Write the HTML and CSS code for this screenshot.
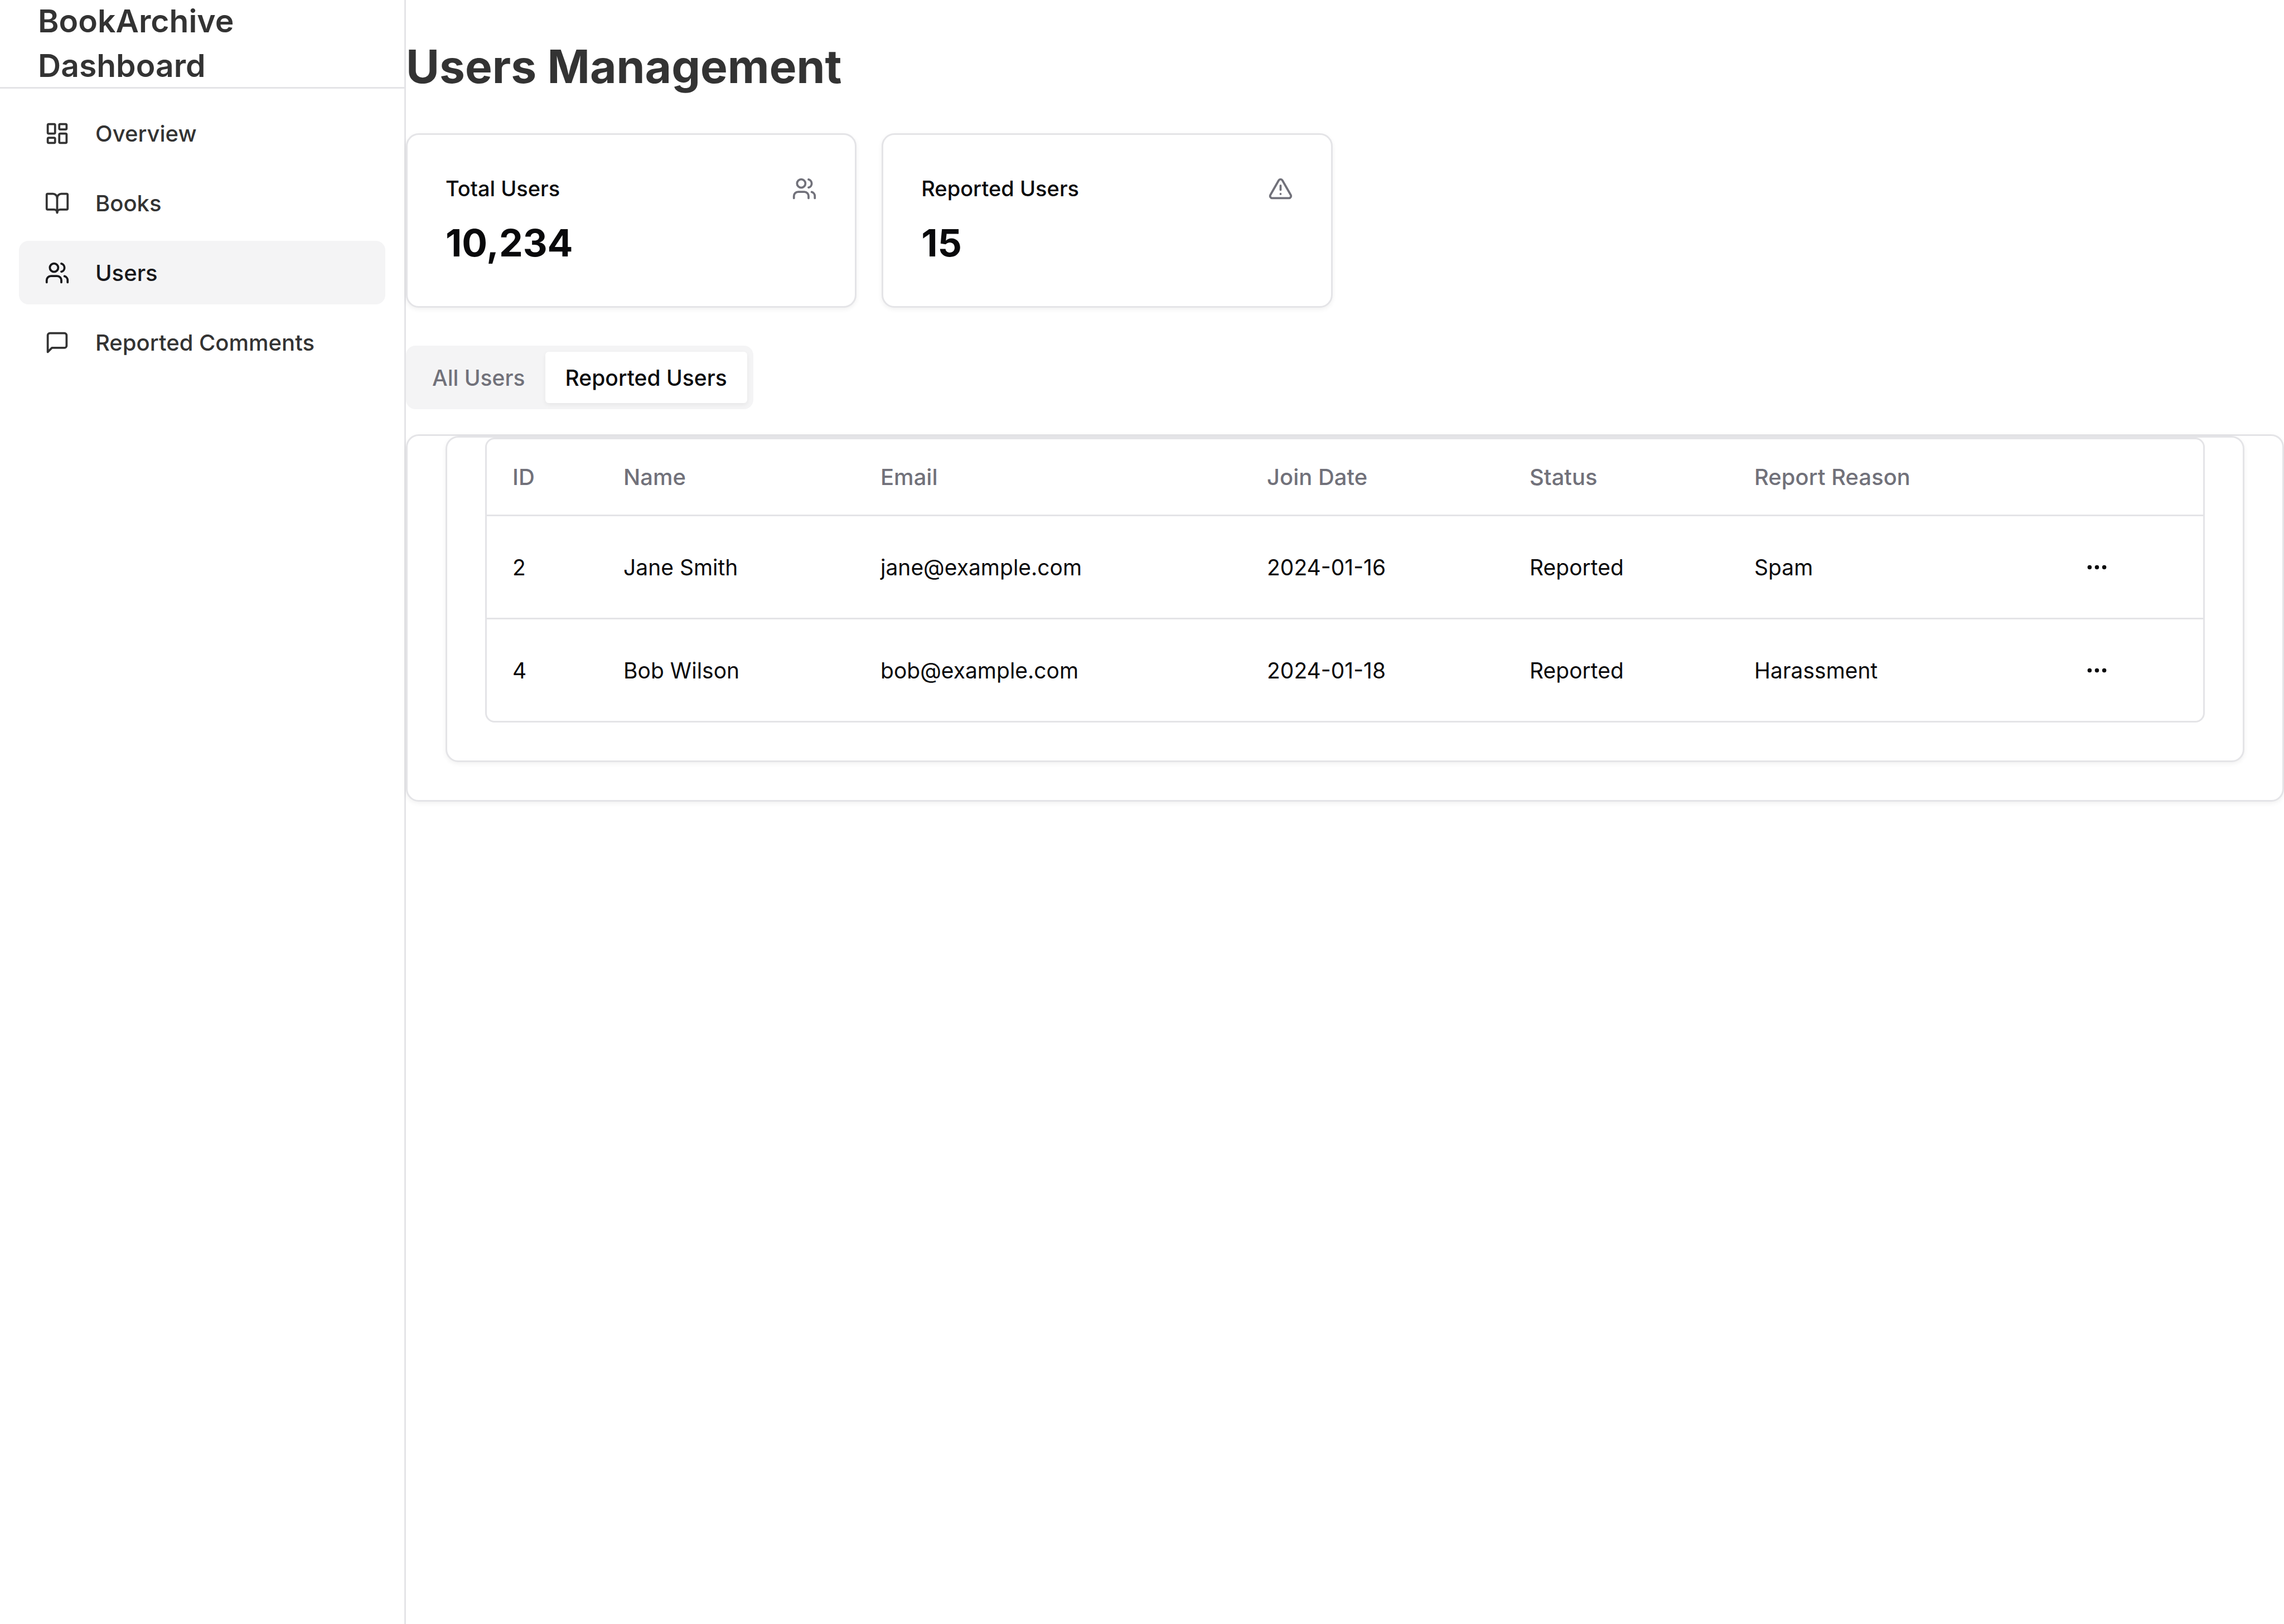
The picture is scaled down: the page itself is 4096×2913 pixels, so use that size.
FILE: index.html
```html
<!DOCTYPE html>
<html lang="en">
<head>
<meta charset="utf-8">
<meta name="viewport" content="width=device-width, initial-scale=1">
<title>Users Management - BookArchive Dashboard</title>
<link rel="stylesheet" href="styles.css">
</head>
<body>
<svg class="sprite" aria-hidden="true">
  <symbol id="icon-users" viewBox="0 0 24 24"><path d="M16 21v-2a4 4 0 0 0-4-4H6a4 4 0 0 0-4 4v2"/><circle cx="9" cy="7" r="4"/><path d="M22 21v-2a4 4 0 0 0-3-3.87"/><path d="M16 3.13a4 4 0 0 1 0 7.75"/></symbol>
  <symbol id="icon-more" viewBox="0 0 24 24"><circle cx="12" cy="12" r="1"/><circle cx="19" cy="12" r="1"/><circle cx="5" cy="12" r="1"/></symbol>
</svg>
<div class="layout">
  <aside class="sidebar">
    <div class="brand"><span class="brand-name">BookArchive Dashboard</span></div>
    <nav class="nav" aria-label="Main">
      <a class="nav-link" href="#overview">
        <svg class="icon" viewBox="0 0 24 24" aria-hidden="true"><rect width="7" height="9" x="3" y="3" rx="1"/><rect width="7" height="5" x="14" y="3" rx="1"/><rect width="7" height="9" x="14" y="12" rx="1"/><rect width="7" height="5" x="3" y="16" rx="1"/></svg>
        Overview
      </a>
      <a class="nav-link" href="#books">
        <svg class="icon" viewBox="0 0 24 24" aria-hidden="true"><path d="M12 7v14"/><path d="M3 18a1 1 0 0 1-1-1V4a1 1 0 0 1 1-1h5a4 4 0 0 1 4 4 4 4 0 0 1 4-4h5a1 1 0 0 1 1 1v13a1 1 0 0 1-1 1h-6a3 3 0 0 0-3 3 3 3 0 0 0-3-3z"/></svg>
        Books
      </a>
      <a class="nav-link nav-link-active" href="#users" aria-current="page">
        <svg class="icon" aria-hidden="true"><use href="#icon-users"/></svg>
        Users
      </a>
      <a class="nav-link" href="#comments">
        <svg class="icon" viewBox="0 0 24 24" aria-hidden="true"><path d="M21 15a2 2 0 0 1-2 2H7l-4 4V5a2 2 0 0 1 2-2h14a2 2 0 0 1 2 2z"/></svg>
        Reported Comments
      </a>
    </nav>
  </aside>

  <main class="main">
    <h1 class="title">Users Management</h1>

    <section class="stats">
      <article class="card stat">
        <header class="stat-head">
          <h2 class="stat-label">Total Users</h2>
          <svg class="icon icon-muted" aria-hidden="true"><use href="#icon-users"/></svg>
        </header>
        <p class="stat-value">10,234</p>
      </article>
      <article class="card stat">
        <header class="stat-head">
          <h2 class="stat-label">Reported Users</h2>
          <svg class="icon icon-muted" viewBox="0 0 24 24" aria-hidden="true"><path d="m21.73 18-8-14a2 2 0 0 0-3.48 0l-8 14A2 2 0 0 0 4 21h16a2 2 0 0 0 1.73-3"/><path d="M12 9v4"/><path d="M12 17h.01"/></svg>
        </header>
        <p class="stat-value">15</p>
      </article>
    </section>

    <section class="listing">
      <div class="tabs" role="tablist">
        <button class="tab" type="button" role="tab" aria-selected="false">All Users</button>
        <button class="tab tab-active" type="button" role="tab" aria-selected="true">Reported Users</button>
      </div>

      <div class="card panel">
        <div class="card panel">
          <div class="table-box">
            <table class="table">
              <colgroup>
                <col class="col-id"><col class="col-name"><col class="col-email"><col class="col-date"><col class="col-status"><col class="col-reason"><col class="col-actions">
              </colgroup>
              <thead>
                <tr><th>ID</th><th>Name</th><th>Email</th><th>Join Date</th><th>Status</th><th>Report Reason</th><th></th></tr>
              </thead>
              <tbody>
                <tr>
                  <td>2</td><td>Jane Smith</td><td>jane@example.com</td><td>2024-01-16</td><td>Reported</td><td>Spam</td>
                  <td><button class="more" type="button" aria-label="Actions for Jane Smith"><svg class="icon" aria-hidden="true"><use href="#icon-more"/></svg></button></td>
                </tr>
                <tr>
                  <td>4</td><td>Bob Wilson</td><td>bob@example.com</td><td>2024-01-18</td><td>Reported</td><td>Harassment</td>
                  <td><button class="more" type="button" aria-label="Actions for Bob Wilson"><svg class="icon" aria-hidden="true"><use href="#icon-more"/></svg></button></td>
                </tr>
              </tbody>
            </table>
          </div>
        </div>
      </div>
    </section>
  </main>
</div>
</body>
</html>
```
FILE: styles.css
```css
:root {
  --border: #e4e4e7;
  --muted: #71717a;
  --muted-bg: #f4f4f5;
  --ink: #09090b;
  --text: #333333;
  --shadow: 0 3px 8px rgba(0, 0, 0, 0.06);
}

*, *::before, *::after { box-sizing: border-box; }

body {
  margin: 0;
  background: #ffffff;
  color: var(--text);
  font-family: Inter, "Liberation Sans", sans-serif;
  font-size: 39px;
  line-height: 57px;
}

h1, h2, p { margin: 0; }

button {
  border: 0;
  background: none;
  color: inherit;
  font: inherit;
  cursor: pointer;
}

.sprite { display: none; }

.icon {
  flex: none;
  width: 45px;
  height: 45px;
  fill: none;
  stroke: currentColor;
  stroke-width: 2;
  stroke-linecap: round;
  stroke-linejoin: round;
}

.icon-muted { color: var(--muted); }

.layout {
  display: flex;
  min-height: 100vh;
}

/* Sidebar */
.sidebar {
  flex: none;
  width: 728px;
  border-right: 3px solid var(--border);
}

.brand {
  display: flex;
  align-items: center;
  height: 159px;
  padding: 0 68px;
  border-bottom: 3px solid var(--border);
}

.brand-name {
  font-size: 57px;
  font-weight: 600;
  line-height: 80px;
}

.nav {
  display: flex;
  flex-direction: column;
  gap: 11px;
  padding: 23px 34px;
}

.nav-link {
  display: flex;
  align-items: center;
  gap: 46px;
  height: 114px;
  padding: 0 46px;
  border-radius: 17px;
  color: inherit;
  font-size: 40px;
  font-weight: 500;
  text-decoration: none;
  white-space: nowrap;
}

.nav-link-active {
  background: var(--muted-bg);
  color: #18181b;
}

/* Main column */
.main {
  display: flex;
  flex: 1;
  flex-direction: column;
  gap: 68px;
  min-width: 0;
  padding: 68px 0;
}

.title {
  font-size: 82px;
  font-weight: 700;
  line-height: 103px;
}

.card {
  border: 3px solid var(--border);
  border-radius: 23px;
  background: #ffffff;
  color: var(--ink);
  box-shadow: var(--shadow);
}

.stats {
  display: grid;
  grid-template-columns: repeat(4, 1fr);
  gap: 45px;
}

.stat {
  display: flex;
  flex-direction: column;
  gap: 23px;
  padding: 68px;
}

.stat-head {
  display: flex;
  align-items: center;
  justify-content: space-between;
}

.stat-label {
  font-size: 38px;
  font-weight: 500;
  line-height: 57px;
}

.stat-value {
  font-size: 68px;
  font-weight: 700;
  line-height: 91px;
}

/* Tabs */
.listing {
  display: flex;
  flex-direction: column;
  align-items: flex-start;
  gap: 45px;
}

.tabs {
  display: flex;
  height: 114px;
  padding: 11px;
  border-radius: 17px;
  background: var(--muted-bg);
  color: var(--muted);
}

.tab {
  padding: 0 36px;
  border-radius: 6px;
  font-weight: 500;
}

.tab-active {
  background: #ffffff;
  color: var(--ink);
  box-shadow: var(--shadow);
}

/* Table */
.panel {
  width: 100%;
  padding: 0 68px 68px;
}

.table-box {
  border: 3px solid var(--border);
  border-radius: 17px;
}

.table {
  width: 100%;
  border-spacing: 0;
  table-layout: fixed;
}

.table th,
.table td {
  padding: 0 46px;
  text-align: left;
  vertical-align: middle;
}

.table th {
  height: 138px;
  border-bottom: 3px solid var(--border);
  color: var(--muted);
  font-size: 40px;
  font-weight: 500;
}

.table td {
  height: 185px;
  border-bottom: 3px solid var(--border);
}

.table tbody tr:last-child td {
  height: 182px;
  border-bottom: 0;
}

.col-id { width: 199px; }
.col-name { width: 461px; }
.col-email { width: 693px; }
.col-date { width: 471px; }
.col-status { width: 403px; }
.col-reason { width: 569px; }
.col-actions { width: 282px; }

.more {
  display: flex;
  align-items: center;
  justify-content: center;
  width: 91px;
  height: 91px;
  padding: 0;
  border-radius: 17px;
}
```
